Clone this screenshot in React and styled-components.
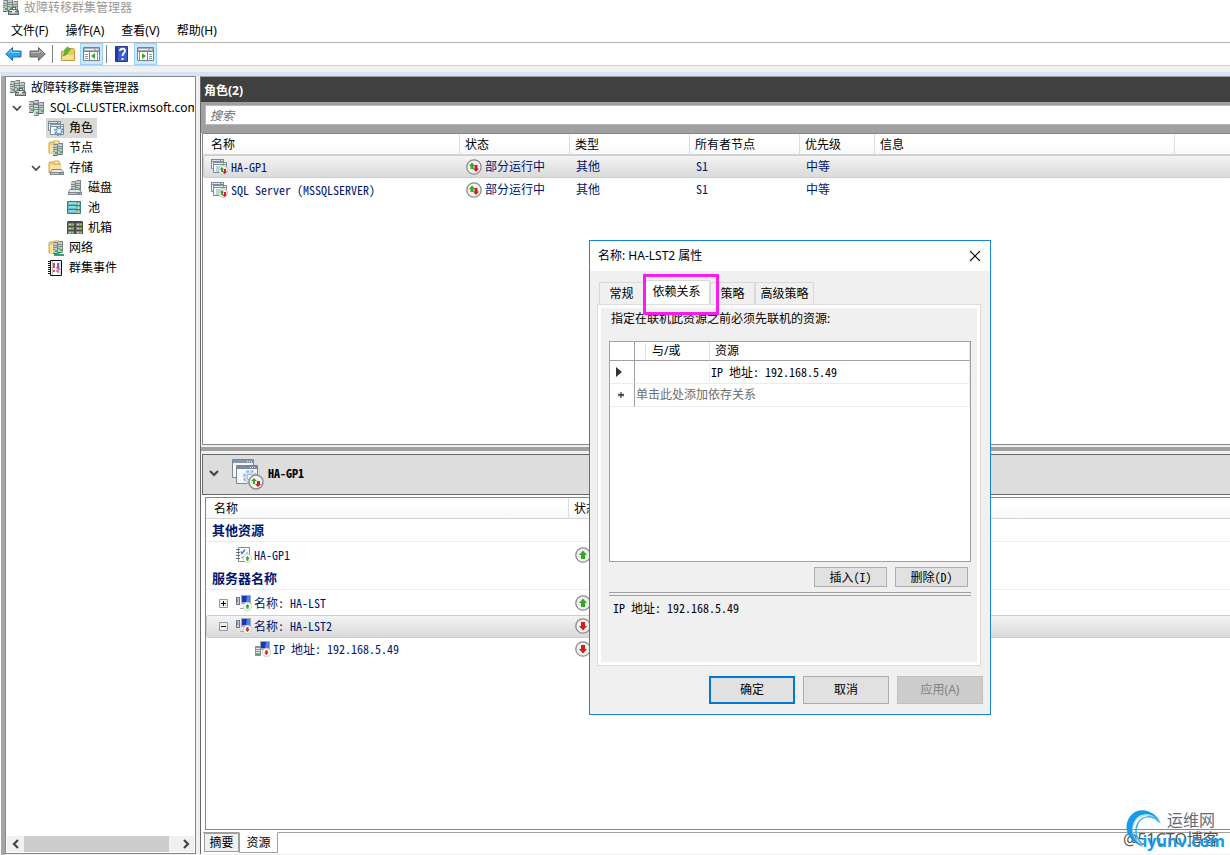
import React from "react";
import styled, { createGlobalStyle } from "styled-components";

const App = () => {
    const [roleTab, setRoleTab] = React.useState("HA-GP1");
    const [resource, setResource] = React.useState("HA-LST2");
    const [search, setSearch] = React.useState("");

    return(
        <Window>
            <GlobalStyle />
            <TitleBar>
                <ClusterIcon />
                <span>故障转移群集管理器</span>
            </TitleBar>
            <MenuBar>
                {menus.map((m) => <MenuItem key={m} type="button">{m}</MenuItem>)}
            </MenuBar>
            <ToolBar>
                <ToolBtn type="button" aria-label="后退"><ArrowIcon /></ToolBtn>
                <ToolBtn type="button" aria-label="前进"><ArrowIcon forward /></ToolBtn>
                <ToolLine />
                <ToolBtn type="button" aria-label="上移一级"><UpFolderIcon /></ToolBtn>
                <ToolBtn type="button" aria-label="显示树" $on><PaneIcon /></ToolBtn>
                <ToolLine />
                <ToolBtn type="button" aria-label="帮助"><HelpIcon /></ToolBtn>
                <ToolBtn type="button" aria-label="显示操作窗格" $on><PaneIcon flip /></ToolBtn>
            </ToolBar>
            <Body>
                <TreePanel>
                    <Tree>
                        {treeItems.map(({ label, Icon, depth, open, selected }) => (
                            <TreeRow key={label} $depth={depth}>
                                <Twisty>{open && <Chevron />}</Twisty>
                                <TreeLabel $selected={selected}><Icon /><span>{label}</span></TreeLabel>
                            </TreeRow>
                        ))}
                    </Tree>
                    <ScrollBar>
                        <ScrollBtn type="button" aria-label="向左"><Chevron turn={90} bold /></ScrollBtn>
                        <ScrollTrack><ScrollThumb /></ScrollTrack>
                        <ScrollBtn type="button" aria-label="向右"><Chevron turn={-90} bold /></ScrollBtn>
                    </ScrollBar>
                </TreePanel>
                <Main>
                    <RoleTitle>角色(2)</RoleTitle>
                    <SearchBar>
                        <SearchInput aria-label="搜索" placeholder="搜索" value={search} onChange={(e) => setSearch(e.target.value)} />
                    </SearchBar>
                    <RoleList>
                        <RoleTable>
                            <colgroup>
                                <Col $w={257} /><Col $w={110} /><Col $w={120} /><Col $w={110} /><Col $w={75} /><Col $w={300} /><col />
                            </colgroup>
                            <thead>
                                <tr>{roleColumns.map((c) => <Th key={c}>{c}</Th>)}<Th /></tr>
                            </thead>
                            <tbody>
                                {roles.map((name) => (
                                    <Row key={name} $selected={name === roleTab} onClick={() => setRoleTab(name)}>
                                        <td><Cell><RoleIcon /><Mono>{name}</Mono></Cell></td>
                                        <td><Cell><StateIcon state="partial" /><span>部分运行中</span></Cell></td>
                                        <td>其他</td>
                                        <td><Mono>S1</Mono></td>
                                        <td>中等</td>
                                        <td />
                                        <td />
                                    </Row>
                                ))}
                            </tbody>
                        </RoleTable>
                    </RoleList>
                    <Splitter />
                    <DetailHead>
                        <Chevron bold />
                        <BigRoleIcon />
                        <Mono>HA-GP1</Mono>
                    </DetailHead>
                    <DetailBody>
                        <ResourceTable>
                            <colgroup><Col $w={363} /><col /></colgroup>
                            <thead><tr><Th>名称</Th><Th>状态</Th></tr></thead>
                            <tbody>
                                <tr><GroupCell colSpan={2}>其他资源</GroupCell></tr>
                                <Row $first>
                                    <td><ResCell $indent={29}><CheckListIcon /><Mono>HA-GP1</Mono></ResCell></td>
                                    <td><StateIcon state="up" /></td>
                                </Row>
                                <tr><GroupCell colSpan={2}>服务器名称</GroupCell></tr>
                                <Row $first $selected={resource === "HA-LST"} onClick={() => setResource("HA-LST")}>
                                    <td><ResCell $indent={12}><Expander /><NameIcon state="up" /><Mono>名称: HA-LST</Mono></ResCell></td>
                                    <td><StateIcon state="up" /></td>
                                </Row>
                                <Row $selected={resource === "HA-LST2"} onClick={() => setResource("HA-LST2")}>
                                    <td><ResCell $indent={12}><Expander open /><NameIcon state="down" /><Mono>名称: HA-LST2</Mono></ResCell></td>
                                    <td><StateIcon state="down" /></td>
                                </Row>
                                <Row>
                                    <td><ResCell $indent={48}><AddressIcon /><Mono>IP 地址: 192.168.5.49</Mono></ResCell></td>
                                    <td><StateIcon state="down" /></td>
                                </Row>
                            </tbody>
                        </ResourceTable>
                    </DetailBody>
                    <BottomTabs>
                        <BottomTab type="button">摘要</BottomTab>
                        <BottomTab type="button" $active>资源</BottomTab>
                    </BottomTabs>
                </Main>
            </Body>
            <PropertyDialog />
            <Watermark />
        </Window>
    )
}

const PropertyDialog = () => {
    const [tab, setTab] = React.useState("依赖关系");

    return(
        <Dialog role="dialog" aria-label="名称: HA-LST2 属性">
            <DialogTitle>
                <span>名称: HA-LST2 属性</span>
                <CloseBtn type="button" aria-label="关闭">
                    <svg width="12" height="12" viewBox="0 0 12 12"><path d="M1 1l10 10M11 1L1 11" stroke="#111" strokeWidth="1.1" /></svg>
                </CloseBtn>
            </DialogTitle>
            <DialogBody>
                <TabStrip role="tablist">
                    {dialogTabs.map(({ name, w }) => (
                        <Tab key={name} type="button" role="tab" aria-selected={name === tab} $w={w} $active={name === tab} onClick={() => setTab(name)}>
                            {name}
                            {name === "依赖关系" && <Marker />}
                        </Tab>
                    ))}
                </TabStrip>
                <TabPane>
                    <Hint>指定在联机此资源之前必须先联机的资源:</Hint>
                    <GridBox>
                        <DepTable>
                            <colgroup><Col $w={25} /><Col $w={75} /><col /></colgroup>
                            <thead><tr><th /><th><AndOr>与/或</AndOr></th><th>资源</th></tr></thead>
                            <tbody>
                                <tr>
                                    <td><svg width="6" height="10" viewBox="0 0 6 10"><path d="M0 0l6 5-6 5z" fill="#333" /></svg></td>
                                    <td />
                                    <td><Mono>IP 地址: 192.168.5.49</Mono></td>
                                </tr>
                                <tr>
                                    <td><svg width="8" height="6" viewBox="0 0 8 6"><path d="M5 0v6M2 2l6 2M2 4l6-2" stroke="#444" strokeWidth="1.3" /></svg></td>
                                    <AddCell colSpan={2}>单击此处添加依存关系</AddCell>
                                </tr>
                            </tbody>
                        </DepTable>
                    </GridBox>
                    <GridActions>
                        <SmallBtn type="button"><Mono>插入(I)</Mono></SmallBtn>
                        <SmallBtn type="button"><Mono>删除(D)</Mono></SmallBtn>
                    </GridActions>
                    <DoubleLine />
                    <Summary><Mono>IP 地址: 192.168.5.49</Mono></Summary>
                </TabPane>
                <DialogActions>
                    <DialogBtn type="button" $primary>确定</DialogBtn>
                    <DialogBtn type="button">取消</DialogBtn>
                    <DialogBtn type="button" disabled>应用(A)</DialogBtn>
                </DialogActions>
            </DialogBody>
        </Dialog>
    )
}

/* ---- icons ---- */

const Servers = ({ x = 0, y = 0, n = 3 }) => (
    <g transform={`translate(${x} ${y})`}>
        {[0, 5, 10].slice(0, n).map((sx, i) => (
            <g key={sx} transform={`translate(${sx} ${[0, -1, 1][i]})`}>
                <path d="M0 2l1-1h4v11l-1 1H0z" fill="#7b8589" />
                <path d="M0 2h4v10H0z" fill="#c2cacb" />
                <path d="M0 4.500h4M0 6.500h4M0 8.500h2" stroke="#828d90" />
                <path d="M2 9h2v2H2z" fill="#3cc42e" />
                <path d="M0 12h4v1H0z" fill="#5c666b" />
            </g>
        ))}
    </g>
)

const ClusterIcon = () => (
    <svg width="16" height="16" viewBox="0 0 16 16">
        <Servers x={0} y={0} />
        <path d="M5 12l2-2h2V8h4v2h1l2 2v4H5z" fill="#5f696e" />
        <path d="M7 11h6l1 1H6z" fill="#e0e4e5" />
        <path d="M10 9h2v1h-2z" fill="#fff" />
        <path d="M6 13h9v2H6z" fill="#a5adb0" />
        <path d="M9 12h3v2H9z" fill="#e8ebeb" />
    </svg>
)

const DomainIcon = () => (
    <svg width="16" height="16" viewBox="0 0 16 16">
        <Servers x={0} y={0} />
        <g transform="translate(5 3)">
            <path d="M0 1h5v11l-1 1H0z" fill="#737d82" />
            <path d="M0 2h4v10H0z" fill="#cfd5d6" />
            <path d="M0 4.500h4M0 6.500h4" stroke="#828d90" />
            <path d="M2 9h2v2H2z" fill="#3cc42e" />
        </g>
    </svg>
)

const WindowShapes = () => (
    <g>
        <path d="M.5 1.500h12v9H.5z" fill="#eef3f6" stroke="#7b8993" />
        <path d="M0 1h13v3H0z" fill="#7d8b96" />
        <path d="M1 2.500h8M10 2.500h2" stroke="#dbe2e7" />
        <path d="M2.500 4.500h13v10h-13z" fill="#f8fafb" stroke="#7b8993" />
        <path d="M2 4h14v3H2z" fill="#84929c" />
        <path d="M3 5.500h9M13 5.500h2" stroke="#e6ebee" />
    </g>
)

const GearWindowIcon = () => (
    <svg width="16" height="16" viewBox="0 0 16 16">
        <WindowShapes />
        <circle cx="11" cy="11" r="4.200" fill="none" stroke="#5f8fb2" strokeWidth="1.600" strokeDasharray="1.800 1.500" />
        <circle cx="11" cy="11" r="3" fill="#cfe2f0" stroke="#6798ba" />
        <circle cx="11" cy="11" r="1" fill="#fff" />
    </svg>
)

const RoleIcon = () => (
    <svg width="17" height="17" viewBox="0 0 17 17">
        <WindowShapes />
        <path d="M5 8h5v6H5z" fill="#b9d3e6" />
        <circle cx="12" cy="12" r="4.500" fill="#eee" stroke="#b7b7b7" strokeWidth=".8" />
        <path d="M8.500 11.500L11 9l2 2.500h-1V14h-2v-2.500z" fill="#36a829" />
        <path d="M11 13.500l2.500 2.500 2.500-2.500h-1V11h-2v2.500z" fill="#d52020" />
    </svg>
)

const BigRoleIcon = () => (
    <svg width="33" height="33" viewBox="0 0 33 33">
        <path d="M1.500 2.500h21v18h-21z" fill="#f4f7f9" stroke="#7b8590" />
        <path d="M2 3h20v3H2z" fill="#8795a6" />
        <path d="M16 4.500h5" stroke="#dfe7f0" strokeDasharray="1 1" />
        <path d="M5.500 8.500h21v18h-21z" fill="#f6f9fb" stroke="#7b8590" />
        <path d="M6 9h20v3H6z" fill="#7989a0" />
        <path d="M19 10.500h6" stroke="#dfe7f0" strokeDasharray="1 1" />
        <circle cx="19" cy="20" r="6" fill="#d3e4f2" stroke="#9fc3e0" strokeWidth="2.500" strokeDasharray="3 1.700" />
        <circle cx="19" cy="20" r="3" fill="#f4f7f9" stroke="#8fb7d8" />
        <circle cx="25" cy="25" r="7" fill="#f3f3f3" stroke="#8d8d8d" strokeWidth="1.500" />
        <path d="M20 24l3-3 3 3h-2v3h-2v-3z" fill="#36a829" />
        <path d="M24 27l3 3 3-3h-1v-3h-3v3z" fill="#d52020" />
    </svg>
)

const Folder = () => (
    <g>
        <path d="M1 3l1-1h4l1 1h5v10H1z" fill="#f3cf75" stroke="#d2a549" />
        <path d="M6 1h5v3H6z" fill="#fff3c8" stroke="#d2a549" />
        <path d="M2 5h10v8H2z" fill="#fbe39b" />
    </g>
)

const NodeIcon = () => (
    <svg width="16" height="16" viewBox="0 0 16 16"><Folder /><Servers x={5} y={3} n={2} /></svg>
)

const Disk = () => (
    <g>
        <path d="M2 12l2-3h9l3 3v3H2z" fill="#7c868c" />
        <path d="M4 10h9l2 2H3z" fill="#e5eaed" />
        <path d="M3 13h12v1H3z" fill="#c5ccd0" />
        <path d="M11 13h3v1h-3z" fill="#43c82e" />
    </g>
)

const StorageIcon = () => (
    <svg width="16" height="16" viewBox="0 0 16 16"><Folder /><Disk /></svg>
)

const DiskIcon = () => (
    <svg width="16" height="16" viewBox="0 0 16 16"><Servers x={4} y={0} n={2} /><g transform="translate(-1 0)"><Disk /></g></svg>
)

const PoolIcon = () => (
    <svg width="16" height="16" viewBox="0 0 16 16">
        {[1, 5, 9].map((y) => (
            <g key={y}>
                <path d={`M.5 ${y + .5}h13v4H.5z`} fill="#63bdc3" stroke="#347e88" />
                <path d={`M2 ${y + 2}h7`} stroke="#c9f2f2" />
                <path d={`M11 ${y + 2}h1v2h-1z`} fill="#fff099" />
            </g>
        ))}
    </svg>
)

const BoxIcon = () => (
    <svg width="16" height="16" viewBox="0 0 16 16">
        <path d="M0 2l1-1h14l1 1v12H0z" fill="#4a4a4a" />
        {[3, 7, 11].map((y) => (
            <g key={y}>
                <path d={`M1 ${y}h6v3H1zM9 ${y}h6v3H9z`} fill="#858585" />
                <path d={`M2 ${y + 1.5}h2M10 ${y + 1.5}h2`} stroke="#ccc" />
                <path d={`M5 ${y + 1.5}h2M13 ${y + 1.5}h2`} stroke="#83cb38" />
            </g>
        ))}
    </svg>
)

const NetworkIcon = () => (
    <svg width="16" height="16" viewBox="0 0 16 16">
        <Folder /><Servers x={5} y={1} n={2} />
        <path d="M10.500 12v3M6 15h10" stroke="#28a777" strokeWidth="2" />
    </svg>
)

const EventIcon = () => (
    <svg width="16" height="16" viewBox="0 0 16 16">
        <path d="M2.500.5h11v15h-11z" fill="#fff" stroke="#111" />
        <path d="M1 1v14" stroke="#111" strokeWidth="2" strokeDasharray="1 1" />
        <path d="M4.500 1v14M12 2v12" stroke="#bbb" />
        <path d="M6 3v5M6 10v2" stroke="#e52020" strokeWidth="1.600" />
        <path d="M10 3v5" stroke="#3446ce" strokeWidth="1.600" />
        <path d="M8 8h3v2H9v2h2" fill="none" stroke="#c62d88" />
    </svg>
)

const ArrowIcon = ({ forward }) => (
    <svg width="17" height="16" viewBox="0 0 17 16">
        <g transform={forward ? "translate(17 0) scale(-1 1)" : undefined}>
            <path d="M.8 8L7.500 1.500V5h8.500v6H7.500v3.500z" fill={forward ? "#8e8e8e" : "#2da5ea"} stroke={forward ? "#656565" : "#1670b4"} strokeLinejoin="round" />
            <path d="M3 7.500L6.500 4v2.500h8.500" fill="none" stroke={forward ? "#bdbdbd" : "#8bd9ff"} />
        </g>
    </svg>
)

const UpFolderIcon = () => (
    <svg width="16" height="16" viewBox="0 0 16 16">
        <path d="M1.500 5.500h6l1-3h5l1 1v11h-13z" fill="#eac96c" stroke="#c49b3d" />
        <path d="M2 9h12v5H2z" fill="#f7df93" />
        <path d="M3 10c1-2 2-3 2.500-5.500H4L7.500.8 10.500 4H9c-.5 3-2.500 5-6 6z" fill="#59c02f" stroke="#318c1d" strokeWidth=".6" />
    </svg>
)

const PaneIcon = ({ flip }) => (
    <svg width="17" height="14" viewBox="0 0 17 14">
        <path d="M.5.5h16v13H.5z" fill="#fff" stroke="#77818c" />
        <path d="M1 1h15v3H1z" fill="#a7b0b9" />
        <path d="M2 2.500h9M13 2.500h2" stroke="#edf1f4" />
        <path d="M1 4.500h15" stroke="#77818c" />
        <g transform={flip ? "translate(17 0) scale(-1 1)" : undefined}>
            <path d="M6.500 5v8" stroke="#77818c" />
            <path d="M2 7.500h3M2 9.500h3M2 11.500h3M14.500 5v8" stroke="#8996a2" />
            <path d="M12 6v6L8 9z" fill="#36a829" />
        </g>
    </svg>
)

const HelpIcon = () => (
    <svg width="13" height="16" viewBox="0 0 13 16">
        <path d="M.5.5h12v15H.5z" fill="#3c5ccc" stroke="#26388c" />
        <path d="M1 1h2v14H1z" fill="#263c9d" />
        <path d="M5 5c0-3 5-3 5 0 0 2-2.500 2-2.500 5M7.500 12v2" fill="none" stroke="#fff" strokeWidth="1.800" />
    </svg>
)

const Chevron = ({ turn = 0, bold }) => (
    <svg width="10" height="10" viewBox="0 0 10 10">
        <path d="M1 3l4 4 4-4" transform={`rotate(${turn} 5 5)`} fill="none" stroke="#444" strokeWidth={bold ? 2.2 : 1.7} />
    </svg>
)

const up = "M8 3.500L12 8h-2v4H6V8H4z";
const down = "M8 12.500L12 8h-2V4H6v4H4z";

const StateIcon = ({ state }) => (
    <svg width="16" height="16" viewBox="0 0 16 16">
        <circle cx="8" cy="8" r="7.200" fill="#f1f1f1" stroke="#8b8b8b" strokeWidth="1.300" />
        {state === "up" && <path d={up} fill="#32aa22" />}
        {state === "down" && <path d={down} fill="#ca2020" />}
        {state === "partial" && (
            <g>
                <path d="M3 7l3-3.500L9 7H7.500v3h-3V7z" fill="#32aa22" />
                <path d="M7 9.500l3 3.500 3-3.500h-1.500V6h-3v3.500z" fill="#ca2020" />
            </g>
        )}
    </svg>
)

const MiniState = ({ state }) => (
    <g transform="translate(7 7) scale(.56)">
        <circle cx="8" cy="8" r="7.500" fill="#fff" stroke="#aaa" />
        <path d={state === "up" ? up : down} fill={state === "up" ? "#32aa22" : "#ca2020"} />
    </g>
)

const Monitor = () => (
    <g>
        <path d="M5 0h10v9H5z" fill="#9eabb8" />
        <path d="M6 1h8v6H6z" fill="#1b35b4" />
        <path d="M11 1h3v6h-4z" fill="#4f7fe8" />
    </g>
)

const NameIcon = ({ state }) => (
    <svg width="16" height="16" viewBox="0 0 16 16">
        <path d="M0 2h4v8H0z" fill="#707980" />
        <path d="M1 3h2v6H1z" fill="#c7ced2" />
        <path d="M1 4h1v3H1z" fill="#48bf36" />
        <Monitor />
        <path d="M4 13h5v1H4zM8 10h2v3H8z" fill="#a1a8ad" />
        <MiniState state={state} />
    </svg>
)

const AddressIcon = () => (
    <svg width="16" height="16" viewBox="0 0 16 16">
        <Monitor />
        <path d="M0 5h6v10H0z" fill="#8b9499" />
        <path d="M1 7.500h4M1 9.500h4M1 11.500h4" stroke="#e3e7e9" />
        <path d="M3 13h2v2H3z" fill="#3cc42e" />
        <MiniState state="down" />
    </svg>
)

const CheckListIcon = () => (
    <svg width="16" height="16" viewBox="0 0 16 16">
        <path d="M2.500.5h11v14h-11z" fill="#fff" stroke="#7f8b96" />
        <path d="M0 2.500h4M0 5.500h4M0 8.500h4M0 11.500h4" stroke="#66717c" />
        <path d="M5 4.500l1 2 3-4" fill="none" stroke="#2c8bcb" strokeWidth="1.500" />
        <path d="M10 6h2M5 10l1 1 2-2" stroke="#7a9aba" fill="none" />
        <MiniState state="up" />
    </svg>
)

const Expander = ({ open }) => (
    <svg width="9" height="9" viewBox="0 0 9 9">
        <path d="M.5.5h8v8h-8z" fill="#f4f2ec" stroke="#7f9db9" />
        <path d={open ? "M2 4.500h5" : "M2 4.500h5M4.500 2v5"} stroke="#000" />
    </svg>
)

const Watermark = () => (
    <Mark>
        <MarkBlog>@51CTO博客</MarkBlog>
        <MarkLogo width="38" height="41" viewBox="0 0 38 41">
            <path d="M36 17C31 2 10-3 3 13-2 25 6 36 19 40 10 34 5 25 9 15 14 5 28 4 36 17z" fill="#159bea" />
            <path d="M35 16C27 4 13 7 9 16c-4 9 0 17 8 22" fill="none" stroke="#8fd3fb" />
            <path d="M34 15C27 7 17 9 13 16c-4 8-2 15 4 21" fill="none" stroke="#3aaef2" strokeWidth="1.500" />
        </MarkLogo>
        <MarkName>运维网</MarkName>
        <MarkSite>iyunv.com</MarkSite>
    </Mark>
)

/* ---- data ---- */

const menus = ["文件(F)", "操作(A)", "查看(V)", "帮助(H)"];
const roleColumns = ["名称", "状态", "类型", "所有者节点", "优先级", "信息"];
const roles = ["HA-GP1", "SQL Server (MSSQLSERVER)"];
const dialogTabs = [
    { name: "常规", w: 44 },
    { name: "依赖关系", w: 67 },
    { name: "策略", w: 45 },
    { name: "高级策略", w: 59 },
];
const treeItems = [
    { label: "故障转移群集管理器", Icon: ClusterIcon, depth: 0 },
    { label: "SQL-CLUSTER.ixmsoft.com", Icon: DomainIcon, depth: 1, open: true },
    { label: "角色", Icon: GearWindowIcon, depth: 2, selected: true },
    { label: "节点", Icon: NodeIcon, depth: 2 },
    { label: "存储", Icon: StorageIcon, depth: 2, open: true },
    { label: "磁盘", Icon: DiskIcon, depth: 3 },
    { label: "池", Icon: PoolIcon, depth: 3 },
    { label: "机箱", Icon: BoxIcon, depth: 3 },
    { label: "网络", Icon: NetworkIcon, depth: 2 },
    { label: "群集事件", Icon: EventIcon, depth: 2 },
];

/* ---- styles ---- */

const GlobalStyle = createGlobalStyle`
    * {
        box-sizing: border-box;
    }
    body {
        margin: 0;
        overflow: hidden;
    }
    body, button, input {
        font-family: "Noto Sans", "Noto Sans CJK SC", sans-serif;
        font-size: 12px;
        line-height: 16px;
        color: #000;
    }
    button {
        padding: 0;
        border: none;
        background: none;
        white-space: nowrap;
    }
    svg {
        display: block;
        flex: none;
    }
`;

const Window = styled.div`
    position: relative;
    display: flex;
    flex-direction: column;
    height: 100vh;
    background: #fff;
    overflow: hidden;
`;

const TitleBar = styled.div`
    display: flex;
    align-items: center;
    gap: 5px;
    height: 20px;
    padding: 0 3px 4px;
    color: #999;
    svg {
        margin-top: -3px;
    }
`;

const MenuBar = styled.div`
    display: flex;
    gap: 17px;
    height: 22px;
    padding-left: 11px;
`;

const MenuItem = styled.button`
    height: 22px;
`;

const ToolBar = styled.div`
    display: flex;
    align-items: center;
    gap: 1px;
    height: 24px;
    padding-left: 2px;
    border-top: 1px solid #b4b4b4;
    border-bottom: 1px solid #d0d0d0;
`;

const ToolBtn = styled.button`
    display: flex;
    align-items: center;
    justify-content: center;
    width: 23px;
    height: 22px;
    border: 1px solid ${(props) => (props.$on ? "#99d1ff" : "transparent")};
    background: ${(props) => (props.$on ? "#cce8ff" : "none")};
`;

const ToolLine = styled.div`
    width: 1px;
    height: 18px;
    margin: 0 2px;
    background: #808080;
`;

const Body = styled.div`
    display: flex;
    flex: 1;
    min-height: 0;
    gap: 4px;
    margin-top: 6px;
    padding: 0 0 1px 4px;
    background: #f0f0f0;
    border-left: 1px solid #fff;
    border-top: 4px solid #d6e3f0;
    box-shadow: inset 4px 0 #a6a6a6, 0 -6px #f0f0f0;
`;

const Panel = styled.div`
    display: flex;
    flex-direction: column;
    background: #fff;
`;

const TreePanel = styled(Panel)`
    flex: 0 0 191px;
    min-width: 0;
    padding: 1px;
    border: 1px solid #828790;
`;

const Tree = styled.div`
    flex: 1;
    overflow: hidden;
`;

const TreeRow = styled.div`
    display: flex;
    align-items: center;
    height: 20px;
    margin-left: ${(props) => [-14, 5, 24, 43][props.$depth]}px;
`;

const Twisty = styled.span`
    flex: 0 0 15px;
`;

const TreeLabel = styled.span`
    display: flex;
    align-items: center;
    gap: 5px;
    height: 20px;
    padding: 0 4px 0 2px;
    white-space: nowrap;
    background: ${(props) => (props.$selected ? "#d9d9d9" : "none")};
`;

const ScrollBar = styled.div`
    display: flex;
    height: 16px;
    background: #f0f0f0;
`;

const ScrollBtn = styled.button`
    display: flex;
    align-items: center;
    justify-content: center;
    width: 17px;
`;

const ScrollTrack = styled.div`
    flex: 1;
`;

const ScrollThumb = styled.div`
    width: 95%;
    height: 100%;
    background: #cdcdcd;
`;

const Main = styled(Panel)`
    flex: 1;
    min-width: 0;
    border-left: 1px solid #696969;
    border-top: 1px solid #a0a0a0;
    overflow: hidden;
`;

const RoleTitle = styled.div`
    padding: 6px 3px 3px;
    color: #fff;
    background: #404040;
    font-weight: bold;
`;

const SearchBar = styled.div`
    padding: 3px 0 8px 4px;
    background: #a0a0a0;
`;

const SearchInput = styled.input`
    display: block;
    width: 100%;
    height: 20px;
    padding: 0 4px;
    border: 1px solid #b8b8b8;
    border-right: none;
    outline: none;
    &::placeholder{
        color: #6d6d6d;
        font-style: italic;
        opacity: 1;
    }
`;

const RoleList = styled.div`
    flex: 311 1 0;
    margin-left: 1px;
    border: 1px solid #828790;
    border-right: none;
    overflow: hidden;
`;

const Splitter = styled.div`
    height: 9px;
    border: solid #f0f0f0;
    border-width: 2px 0 3px;
    background: #a0a0a0;
`;

const Col = styled.col`
    width: ${(props) => props.$w}px;
`;

const RoleTable = styled.table`
    width: 100%;
    table-layout: fixed;
    border-collapse: separate;
    border-spacing: 0;
    td {
        padding: 0 6px;
    }
    th:first-child {
        padding-left: 8px;
    }
    td:first-child {
        padding-left: 7px;
    }
`;

const Th = styled.th`
    height: 21px;
    padding: 2px 5px 0;
    border-right: 1px solid #dedede;
    border-bottom: 1px solid #d5d5d5;
    background: linear-gradient(#fff 40%, #f7f8fa);
    font-weight: normal;
    text-align: left;
    &:last-child{
        border-right: none;
    }
`;

const Row = styled.tr`
    color: #00156e;
    && td {
        height: ${(props) => (props.$first ? 25 : 23)}px;
        padding-top: ${(props) => (props.$first ? 2 : 0)}px;
        border-top: 1px solid ${(props) => (props.$selected ? "#cdcdcd" : "transparent")};
        border-bottom: 1px solid ${(props) => (props.$selected ? "#cdcdcd" : "transparent")};
        background: ${(props) => (props.$selected ? "linear-gradient(#f4f4f4, #dadada)" : "none")};
        white-space: nowrap;
    }
    td:first-child {
        border-left: 1px solid ${(props) => (props.$selected ? "#cdcdcd" : "transparent")};
        border-radius: 3px 0 0 3px;
    }
`;

const Cell = styled.div`
    display: flex;
    align-items: center;
    gap: 3px;
`;

// half-width latin, same advance as half a han character
const Mono = styled.span`
    font-family: "Noto Sans CJK SC", sans-serif;
    font-feature-settings: "hwid";
    white-space: pre;
`;

const DetailHead = styled.div`
    display: flex;
    align-items: center;
    gap: 12px;
    height: 41px;
    margin-left: 1px;
    padding: 0 0 2px 6px;
    border: 1px solid #696969;
    border-right: none;
    background: #ddd;
    font-weight: bold;
    ${Mono} {
        margin-left: -8px;
    }
`;

const DetailBody = styled.div`
    flex: 333 1 0;
    margin: 2px 0 2px 4px;
    border: 1px solid #828790;
    border-right: none;
    overflow: hidden;
`;

const ResourceTable = styled(RoleTable)`
    td:first-child {
        padding-left: 0;
    }
    td:last-child {
        padding-left: 6px;
    }
`;

const GroupCell = styled.td`
    height: 23px;
    color: #00156e;
    border-bottom: 1px solid #ececec;
    font-size: 13px;
    font-weight: bold;
    && {
        padding-left: 6px;
    }
`;

const ResCell = styled(Cell)`
    padding-left: ${(props) => props.$indent}px;
    gap: 2px;
    svg + svg {
        margin-left: 6px;
    }
`;

const BottomTabs = styled.div`
    display: flex;
    height: 22px;
    margin-left: 2px;
    padding-left: 1px;
    border-top: 1px solid #a0a0a0;
`;

const BottomTab = styled.button`
    width: ${(props) => (props.$active ? 39 : 35)}px;
    height: ${(props) => (props.$active ? 21 : 19)}px;
    margin-top: ${(props) => (props.$active ? -1 : 0)}px;
    background: ${(props) => (props.$active ? "#fff" : "#f0f0f0")};
    border: 1px solid #a0a0a0;
    border-top-color: ${(props) => (props.$active ? "#fff" : "#a0a0a0")};
`;

const Dialog = styled.div`
    position: absolute;
    left: 589px;
    top: 240px;
    width: 402px;
    border: 1px solid #1883d7;
    background: #f0f0f0;
`;

const DialogTitle = styled.div`
    display: flex;
    align-items: center;
    justify-content: space-between;
    height: 30px;
    padding: 0 9px 0 8px;
    background: #fff;
`;

const CloseBtn = styled.button`
    display: flex;
`;

const DialogBody = styled.div`
    padding: 9px 7px 10px;
`;

const TabStrip = styled.div`
    display: flex;
    align-items: flex-end;
    padding-left: 2px;
`;

const Tab = styled.button`
    position: relative;
    width: ${(props) => props.$w}px;
    height: ${(props) => (props.$active ? 24 : 22)}px;
    padding-bottom: ${(props) => (props.$active ? 2 : 0)}px;
    border: 1px solid #d9d9d9;
    border-bottom: none;
    background: ${(props) => (props.$active ? "#fff" : "#f0f0f0")};
    &:first-child{
        border-right: none;
    }
`;

// highlight drawn over the dependency tab
const Marker = styled.span`
    position: absolute;
    z-index: 1;
    left: -1px;
    top: -7px;
    width: 76px;
    height: 41px;
    border: 3px solid #f81cf0;
    pointer-events: none;
`;

const TabPane = styled.div`
    height: 362px;
    margin-right: 2px;
    padding: 6px 9px 0 11px;
    border: 1px solid #dcdcdc;
    box-shadow: inset 0 0 0 3px #fff;
`;

const Hint = styled.div`
    padding: 0 2px 2px;
`;

const GridBox = styled.div`
    height: 221px;
    margin-top: 12px;
    border: 1px solid #a0a0a0;
    background: #fff;
`;

const DepTable = styled.table`
    width: 100%;
    table-layout: fixed;
    border-collapse: separate;
    border-spacing: 0;
    th {
        height: 19px;
        padding: 0 5px;
        border-right: 1px solid #e0e0e0;
        border-bottom: 1px solid #a0a0a0;
        font-weight: normal;
        text-align: left;
    }
    td {
        height: 23px;
        padding: 0 1px;
        border-right: 1px solid #ececec;
        border-bottom: 1px solid #ececec;
    }
    th:first-child, td:first-child {
        padding-left: 6px;
        border-right: 1px solid #a0a0a0;
    }
`;

const AndOr = styled.span`
    display: block;
    margin-left: 5px;
    padding-left: 6px;
    border-left: 1px solid #e0e0e0;
`;

const AddCell = styled.td`
    color: #6d6d6d;
`;

const GridActions = styled.div`
    display: flex;
    justify-content: flex-end;
    gap: 8px;
    padding: 5px 3px;
`;

const SmallBtn = styled.button`
    width: 73px;
    height: 20px;
    border: 1px solid #adadad;
    background: #e1e1e1;
`;

const DoubleLine = styled.div`
    height: 4px;
    border: solid #a0a0a0;
    border-width: 1px 0;
`;

const Summary = styled.div`
    padding: 4px;
`;

const DialogActions = styled.div`
    display: flex;
    justify-content: flex-end;
    gap: 8px;
    margin-top: 10px;
`;

const DialogBtn = styled.button`
    width: 86px;
    height: 28px;
    border: ${(props) => (props.$primary ? "2px solid #0078d7" : "1px solid #adadad")};
    background: #e1e1e1;
    &:disabled{
        color: #838383;
        border-color: #bfbfbf;
        background: #ccc;
    }
`;

const Mark = styled.div`
    position: absolute;
    right: 5px;
    bottom: 6px;
    width: 100px;
    height: 42px;
`;

const MarkLogo = styled.svg`
    position: absolute;
    left: 0;
    top: 0;
`;

const MarkText = styled.span`
    position: absolute;
    white-space: nowrap;
`;

const MarkName = styled(MarkText)`
    left: 42px;
    top: 5px;
    color: #666c77;
    font-size: 16px;
`;

const MarkBlog = styled(MarkText)`
    left: -2px;
    bottom: 2px;
    color: #555;
    font-size: 16px;
    text-shadow: 1px 1px #fff;
`;

const MarkSite = styled(MarkText)`
    right: 0;
    bottom: 0;
    color: #159bea;
    font-family: "Open Sans", sans-serif;
    font-size: 16px;
    font-weight: bold;
`;

export default App;
